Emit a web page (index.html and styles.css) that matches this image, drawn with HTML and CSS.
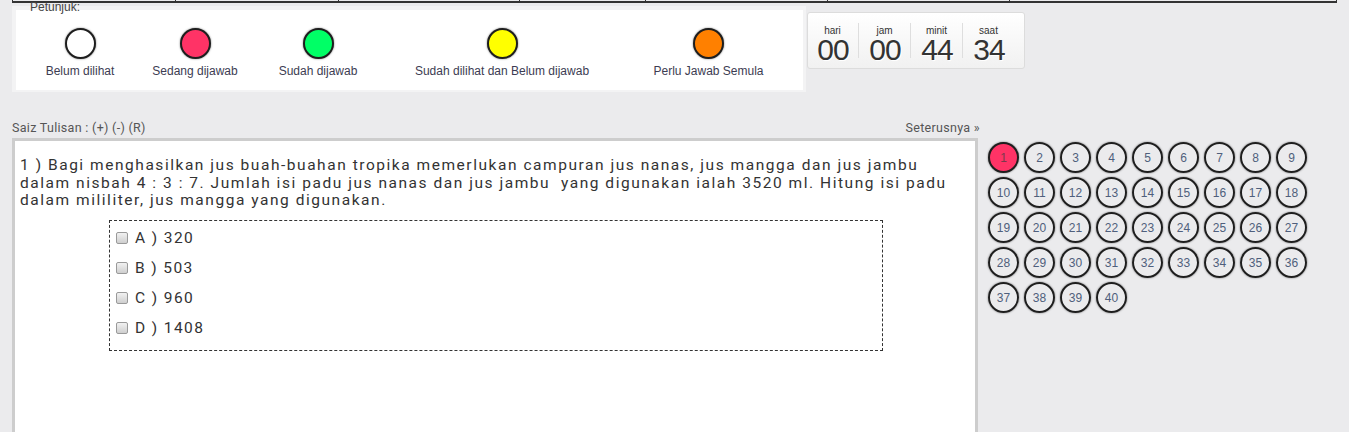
FILE: index.html
```html
<!DOCTYPE html>
<html lang="ms">
<head>
<meta charset="utf-8">
<title>Soalan</title>
<link rel="stylesheet" href="styles.css">
</head>
<body>
<div class="topbar">
  <span class="tcell w1"></span><span class="tcell w1"></span><span class="tcell w2"></span><span class="tcell w3"></span><span class="tcell w4"></span><span class="tcell w4"></span><span class="tcell w5"></span>
</div>

<div class="header">
  <div class="legend-panel">
    <div class="legend-title">Petunjuk:</div>
    <div class="legend-box">
      <div class="legend-item"><span class="dot"></span><span class="legend-label">Belum dilihat</span></div>
      <div class="legend-item"><span class="dot red"></span><span class="legend-label">Sedang dijawab</span></div>
      <div class="legend-item"><span class="dot green"></span><span class="legend-label">Sudah dijawab</span></div>
      <div class="legend-item"><span class="dot yellow"></span><span class="legend-label">Sudah dilihat dan Belum dijawab</span></div>
      <div class="legend-item"><span class="dot orange"></span><span class="legend-label">Perlu Jawab Semula</span></div>
    </div>
  </div>
  <div class="timer">
    <div class="seg"><span class="seg-label">hari</span><span class="seg-num">00</span></div>
    <span class="divider"></span>
    <div class="seg"><span class="seg-label">jam</span><span class="seg-num">00</span></div>
    <span class="divider"></span>
    <div class="seg"><span class="seg-label">minit</span><span class="seg-num">44</span></div>
    <span class="divider"></span>
    <div class="seg"><span class="seg-label">saat</span><span class="seg-num">34</span></div>
  </div>
</div>

<div class="main">
  <div class="left-col">
    <div class="toolbar">
      <span>Saiz Tulisan : (+) (-) (R)</span>
      <span>Seterusnya »</span>
    </div>
    <div class="question-box">
      <p class="question">1 ) Bagi menghasilkan jus buah-buahan tropika memerlukan campuran jus nanas, jus mangga dan jus jambu dalam nisbah 4 : 3 : 7. Jumlah isi padu jus nanas dan jus jambu&nbsp; yang digunakan ialah 3520 ml. Hitung isi padu dalam mililiter, jus mangga yang digunakan.</p>
      <div class="options">
        <label class="option"><input type="checkbox" class="chk"><span>A ) 320</span></label>
        <label class="option"><input type="checkbox" class="chk"><span>B ) 503</span></label>
        <label class="option"><input type="checkbox" class="chk"><span>C ) 960</span></label>
        <label class="option"><input type="checkbox" class="chk"><span>D ) 1408</span></label>
      </div>
    </div>
  </div>
  <div class="qgrid">
    <span class="qnum current">1</span><span class="qnum">2</span><span class="qnum">3</span><span class="qnum">4</span><span class="qnum">5</span><span class="qnum">6</span><span class="qnum">7</span><span class="qnum">8</span><span class="qnum">9</span>
    <span class="qnum">10</span><span class="qnum">11</span><span class="qnum">12</span><span class="qnum">13</span><span class="qnum">14</span><span class="qnum">15</span><span class="qnum">16</span><span class="qnum">17</span><span class="qnum">18</span>
    <span class="qnum">19</span><span class="qnum">20</span><span class="qnum">21</span><span class="qnum">22</span><span class="qnum">23</span><span class="qnum">24</span><span class="qnum">25</span><span class="qnum">26</span><span class="qnum">27</span>
    <span class="qnum">28</span><span class="qnum">29</span><span class="qnum">30</span><span class="qnum">31</span><span class="qnum">32</span><span class="qnum">33</span><span class="qnum">34</span><span class="qnum">35</span><span class="qnum">36</span>
    <span class="qnum">37</span><span class="qnum">38</span><span class="qnum">39</span><span class="qnum">40</span>
  </div>
</div>
</body>
</html>
```

FILE: styles.css
```css
* { box-sizing: border-box; }
html, body { height: 100%; }
body {
  margin: 0;
  background: #ebebed;
  font-family: "Liberation Sans", Arial, sans-serif;
  color: #333;
  overflow: hidden;
}

/* top strip (bottom of a table above) */
.topbar {
  display: flex;
  margin-left: 12px;
  width: 1325px;
  height: 3px;
  border-left: 1px solid #333;
  border-bottom: 2px solid #333;
}
.tcell { height: 1px; border-right: 1px solid #333; }
.w1 { width: 163px; }
.w2 { width: 181px; }
.w3 { width: 126px; }
.w4 { width: 182px; }
.w5 { width: 327px; }

/* header */
.header { display: flex; align-items: flex-start; }
.legend-panel {
  margin: 3px 0 0 12px;
  width: 794px;
  background: #f3f3f4;
  padding: 4px 3px 2px 4px;
}
.legend-title {
  position: relative;
  z-index: 1;
  margin: -10px 0 -4px 14px;
  font-size: 12px;
  line-height: 14px;
  color: #444;
}
.legend-box {
  background: #fff;
  height: 80px;
  display: grid;
  grid-template-columns: 128px 102px 144px 224px 189px;
  padding-top: 18px;
}
.legend-item {
  display: flex;
  flex-direction: column;
  align-items: center;
}
.legend-label {
  margin-top: 5px;
  font-size: 12px;
  line-height: 14px;
  color: #3c3c52;
  white-space: nowrap;
}
.dot {
  display: block;
  width: 31px;
  height: 31px;
  border-radius: 50%;
  border: 2px solid #1e1e1e;
  background: #fff;
  box-shadow: 0 0 2px rgba(0,0,0,.55);
}
.red { background: #ff3366; }
.green { background: #00ff66; }
.yellow { background: #ffff00; }
.orange { background: #ff8000; }

/* timer */
.timer {
  margin: 9px 0 0 1px;
  width: 218px;
  height: 57px;
  border: 1px solid #dcdcdc;
  border-radius: 3px;
  background: linear-gradient(#ffffff, #f1f1f1);
  display: flex;
  align-items: center;
  padding: 0 0 0 9px;
}
.seg {
  display: flex;
  flex-direction: column;
  align-items: center;
  width: 31px;
  padding-top: 9px;
}
.seg-label {
  font-size: 10px;
  line-height: 10px;
  color: #333;
}
.seg-num {
  font-size: 30px;
  line-height: 28px;
  letter-spacing: -1px;
  margin-right: -1px;
  color: #333;
  text-shadow: 1px 1px 0 #fff;
}
.divider {
  width: 1px;
  height: 35px;
  background: #dedede;
  margin: 0 10px;
}

/* main */
.main { display: flex; align-items: flex-start; padding-left: 12px; }
.left-col { width: 968px; }
.toolbar {
  display: flex;
  justify-content: space-between;
  margin-top: 28px;
  font-family: Roboto, "Liberation Sans", sans-serif;
  font-size: 12.5px;
  letter-spacing: 0.3px;
  line-height: 16px;
  color: #555;
}
.question-box {
  margin-top: 2px;
  width: 966px;
  height: 320px;
  background: #fff;
  border: 3px solid #cdcdcd;
  padding: 16px 25px 0 5px;
  font-family: Roboto, "Liberation Sans", sans-serif;
  color: #333;
}
.question {
  margin: 0;
  font-size: 15.5px;
  line-height: 17.5px;
  letter-spacing: 1.54px;
}
.options {
  width: 774px;
  margin: 10px 0 0 89px;
  border: 1px dashed #333;
  padding: 2px 0 7px 5px;
}
.option {
  display: flex;
  align-items: center;
  height: 30px;
  font-size: 15.5px;
  letter-spacing: 1.4px;
}
.chk {
  appearance: none;
  -webkit-appearance: none;
  margin: 0 7px 0 1px;
  width: 12px;
  height: 12px;
  border: 1px solid #9a9a9a;
  border-radius: 2px;
  background: linear-gradient(#f2f2f2, #cfcfcf);
}

/* question grid */
.qgrid {
  margin: 50px 0 0 8px;
  display: grid;
  grid-template-columns: repeat(9, 31px);
  column-gap: 5px;
  row-gap: 4px;
}
.qnum {
  width: 31px;
  height: 31px;
  border-radius: 50%;
  border: 2px solid #1e1e1e;
  box-shadow: 0 0 2px rgba(0,0,0,.55);
  display: flex;
  align-items: center;
  justify-content: center;
  font-size: 12px;
  color: #4f5f7c;
}
.qnum.current { background: #ff3366; color: #7a3a4c; }
```
